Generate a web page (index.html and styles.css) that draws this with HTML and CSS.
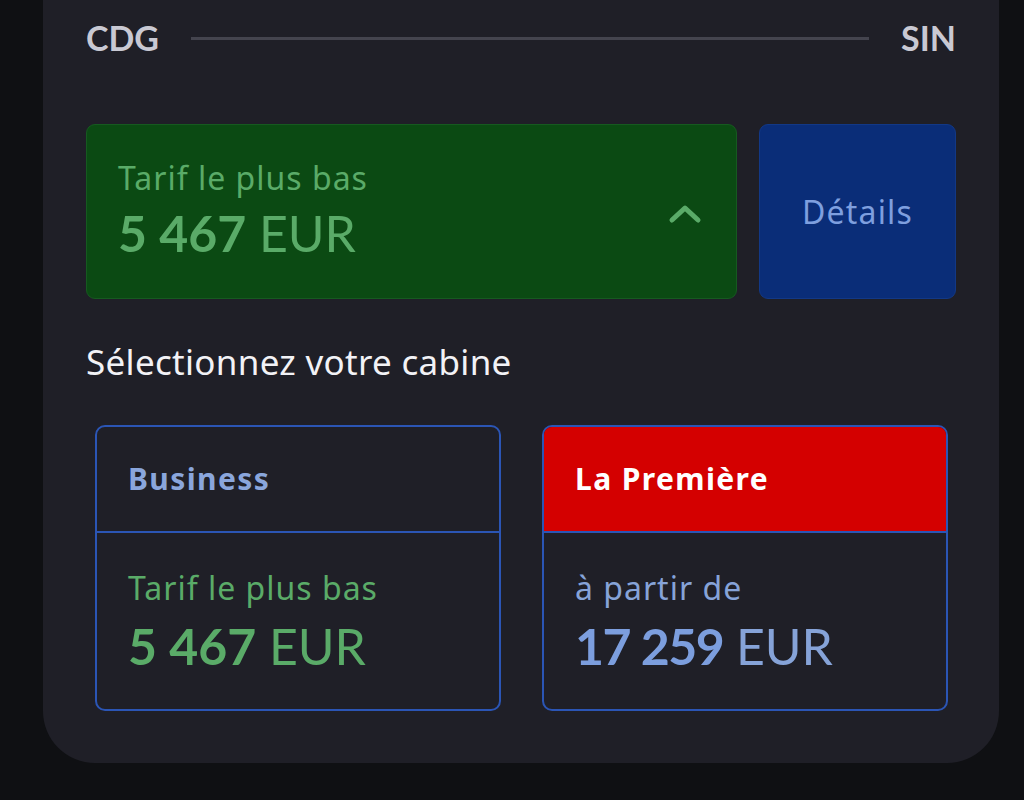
FILE: index.html
```html
<!DOCTYPE html>
<html lang="fr">
<head>
<meta charset="UTF-8">
<meta name="viewport" content="width=device-width, initial-scale=1.0">
<title>Sélection de cabine</title>
<link rel="stylesheet" href="styles.css">
</head>
<body>

<div class="panel">
    <div class="route">
        <span class="airport">CDG</span>
        <span class="route-line"></span>
        <span class="airport">SIN</span>
    </div>

    <div class="fare-row">
        <div class="fare-box">
            <div>
                <div class="fare-label">Tarif le plus bas</div>
                <div class="fare-price"><b>5 467</b> EUR</div>
            </div>
            <svg class="chevron" width="34" height="22" viewBox="0 0 34 22">
                <path d="M4 17 L17 5 L30 17" fill="none" stroke="#5aab68" stroke-width="5" stroke-linecap="round" stroke-linejoin="round"/>
            </svg>
        </div>
        <button class="details-btn" type="button">Détails</button>
    </div>

    <h2 class="section-title">Sélectionnez votre cabine</h2>

    <div class="cabins">
        <div class="cabin">
            <div class="cabin-head">Business</div>
            <div class="cabin-body">
                <div class="cabin-label green">Tarif le plus bas</div>
                <div class="cabin-price green"><b>5 467</b> EUR</div>
            </div>
        </div>
        <div class="cabin">
            <div class="cabin-head premiere">La Première</div>
            <div class="cabin-body">
                <div class="cabin-label blue">à partir de</div>
                <div class="cabin-price blue"><b class="tight">17 259</b> EUR</div>
            </div>
        </div>
    </div>
</div>

</body>
</html>
```

FILE: styles.css
```css
body {
    margin: 0;
    padding: 0;
    background-color: #0f1013;
    font-family: "Noto Sans", Lato, sans-serif;
    line-height: 1.2;
}
.panel {
    width: 956px;
    margin-left: 43px;
    box-sizing: border-box;
    padding: 18px 43px 52px 43px;
    background-color: #1f1f27;
    border-radius: 0 0 52px 52px;
}
.route {
    display: flex;
    align-items: center;
    gap: 32px;
}
.airport {
    font-family: Lato, sans-serif;
    font-size: 34px;
    font-weight: 700;
    color: #c9c9d3;
}
.route-line {
    flex: 1;
    height: 3px;
    background-color: #44444e;
}
.fare-row {
    display: flex;
    gap: 22px;
    margin-top: 65px;
    height: 175px;
}
.fare-box {
    flex: 1;
    display: flex;
    align-items: center;
    justify-content: space-between;
    padding: 0 34px 0 31px;
    background-color: #0b4a13;
    border: 1px solid #165a20;
    border-radius: 9px;
    color: #5aab68;
}
.fare-label {
    font-size: 32px;
    letter-spacing: 1px;
}
.fare-price {
    font-family: Lato, sans-serif;
    font-size: 50px;
    margin-top: 6px;
}
.chevron {
    margin-top: 6px;
}
.details-btn {
    width: 197px;
    background-color: #0a2d78;
    border: 1px solid #123886;
    border-radius: 9px;
    color: #7e9fdf;
    font-family: inherit;
    font-size: 32px;
    letter-spacing: 1.2px;
    padding: 0;
}
.section-title {
    margin: 42px 0 0 0;
    font-size: 35px;
    font-weight: 400;
    letter-spacing: 0.3px;
    color: #f2f2f6;
}
.cabins {
    display: grid;
    grid-template-columns: 406px 406px;
    gap: 41px;
    margin: 42px 0 0 9px;
}
.cabin {
    border: 2px solid #2b55b5;
    border-radius: 10px;
    overflow: hidden;
}
.cabin-head {
    height: 104px;
    display: flex;
    align-items: center;
    padding-left: 31px;
    font-size: 30px;
    font-weight: 700;
    letter-spacing: 1.4px;
    color: #8aa6dc;
    border-bottom: 2px solid #2b55b5;
}
.cabin-head.premiere {
    background-color: #d40000;
    color: #ffffff;
}
.cabin-body {
    padding: 36px 31px 33px 31px;
}
.cabin-label {
    font-size: 32px;
    letter-spacing: 1px;
}
.cabin-price {
    font-family: Lato, sans-serif;
    font-size: 50px;
    margin-top: 9px;
}
.tight {
    letter-spacing: -1.5px;
}
.green {
    color: #5aab68;
}
.blue {
    color: #86a3d8;
}
.cabin-price.blue b {
    color: #7c9ede;
}
```
